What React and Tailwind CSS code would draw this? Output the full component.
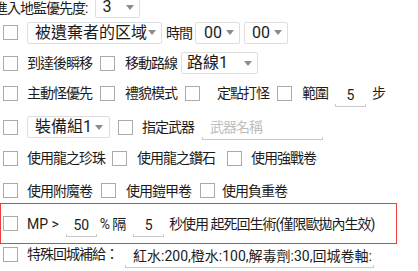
import React from "react";

const Cb = ({ className = "" }) => (
  <div className={`w-[15px] h-[15px] border border-[#ababab] bg-white shrink-0 ${className}`} />
);

const Arrow = () => (
  <div className="w-0 h-0 border-l-[4px] border-r-[4px] border-t-[5px] border-l-transparent border-r-transparent border-t-[#8c8c8c] shrink-0" />
);

const Sel = ({ children, className = "" }) => (
  <div className={`flex items-center justify-between border border-[#dedede] rounded-[2px] bg-white shrink-0 text-[16px] leading-none whitespace-nowrap ${className}`}>
    <span className="whitespace-nowrap">{children}</span>
    <Arrow />
  </div>
);

const UL = ({ children, className = "", inner = "" }) => (
  <div className={`flex flex-col shrink-0 ${className}`}>
    <div className={`flex-1 flex items-center ${inner}`}>{children}</div>
    <div className="h-[3px] border-x border-b border-[#c9c9c9]" />
  </div>
);

const L = ({ children, className = "" }) => (
  <span className={`text-[14px] tracking-[-1px] leading-none whitespace-nowrap shrink-0 ${className}`}>{children}</span>
);

const N = ({ children, className = "" }) => (
  <span className={`text-[14px] leading-none whitespace-nowrap shrink-0 ${className}`}>{children}</span>
);

export default function App() {
  return (
    <div
      className="w-[418px] h-[271px] overflow-hidden bg-white text-[#1c1c1c] flex flex-col"
      style={{ fontFamily: "Roboto, 'Noto Sans CJK TC', sans-serif" }}
    >
      {/* Row 1 */}
      <div className="flex items-center h-[22px] mt-[-4px] shrink-0">
        <L className="ml-[-6px] mt-[2px]">進入地監優先度:</L>
        <Sel className="ml-[8px] w-[45px] h-[21px] pl-[6px] pr-[5px]">3</Sel>
      </div>
      {/* Row 2 */}
      <div className="flex items-center h-[23px] mt-[3px] shrink-0">
        <Cb className="ml-[3px]" />
        <Sel className="ml-[9px] w-[135px] h-[22px] pl-[7px] pr-[5px]">被遺棄者的区域</Sel>
        <L className="ml-[4px]">時間</L>
        <Sel className="ml-[3px] w-[45px] h-[22px] pl-[8px] pr-[5px]">00</Sel>
        <Sel className="ml-[4px] w-[44px] h-[22px] pl-[7px] pr-[5px]">00</Sel>
      </div>
      {/* Row 3 */}
      <div className="flex items-center h-[22px] mt-[8px] shrink-0">
        <Cb className="ml-[3px]" />
        <L className="ml-[9px]">到達後瞬移</L>
        <Cb className="ml-[8px]" />
        <L className="ml-[10px]">移動路線</L>
        <Sel className="ml-[4px] w-[77px] h-[22px] pl-[5px] pr-[5px]">路線1</Sel>
      </div>
      {/* Row 4 */}
      <div className="flex items-center h-[22px] mt-[8px] shrink-0">
        <Cb className="ml-[3px]" />
        <L className="ml-[9px]">主動怪優先</L>
        <Cb className="ml-[8px]" />
        <L className="ml-[10px]">禮貌模式</L>
        <Cb className="ml-[8px]" />
        <L className="ml-[17px]">定點打怪</L>
        <Cb className="ml-[8px]" />
        <L className="ml-[10px]">範圍</L>
        <UL className="ml-[7px] w-[31px] h-[22px] mt-[6px]" inner="justify-center">
          <N>5</N>
        </UL>
        <L className="ml-[6px]">步</L>
      </div>
      {/* Row 5 */}
      <div className="flex items-center h-[22px] mt-[12px] shrink-0">
        <Cb className="ml-[3px]" />
        <Sel className="ml-[9px] w-[83px] h-[22px] pl-[7px] pr-[6px]">裝備組1</Sel>
        <Cb className="ml-[8px]" />
        <L className="ml-[9px]">指定武器</L>
        <UL className="ml-[8px] w-[121px] h-[22px] mt-[3px]" inner="pl-[8px]">
          <L className="text-[#bdbdbd]">武器名稱</L>
        </UL>
      </div>
      {/* Row 6 */}
      <div className="flex items-center h-[22px] mt-[9px] shrink-0">
        <Cb className="ml-[3px]" />
        <L className="ml-[9px]">使用龍之珍珠</L>
        <Cb className="ml-[7px]" />
        <L className="ml-[10px]">使用龍之鑽石</L>
        <Cb className="ml-[12px]" />
        <L className="ml-[9px]">使用強戰卷</L>
      </div>
      {/* Row 7 */}
      <div className="flex items-center h-[23px] mt-[10px] shrink-0">
        <Cb className="ml-[3px]" />
        <L className="ml-[9px]">使用附魔卷</L>
        <Cb className="ml-[9px]" />
        <L className="ml-[10px]">使用鎧甲卷</L>
        <Cb className="ml-[9px]" />
        <L className="ml-[7px]">使用負重卷</L>
      </div>
      {/* Red row */}
      <div className="flex items-center w-[397px] h-[41px] mt-[1px] border border-[#ee3b3b] shrink-0">
        <Cb className="ml-[2px]" />
        <N className="ml-[9px]">MP &gt;</N>
        <UL className="ml-[7px] w-[31px] h-[22px] mt-[5px]" inner="justify-center">
          <N>50</N>
        </UL>
        <N className="ml-[3px]">%</N>
        <L className="ml-[2px]">隔</L>
        <UL className="ml-[8px] w-[31px] h-[22px] mt-[5px]" inner="justify-center">
          <N>5</N>
        </UL>
        <L className="ml-[5px] tracking-[-0.7px]">秒使用 起死回生術(僅限歐拋內生效)</L>
      </div>
      {/* Last row */}
      <div className="flex items-center h-[22px] mt-[-1px] shrink-0">
        <Cb className="ml-[3px]" />
        <L className="ml-[9px]">特殊回城補給：</L>
        <UL className="ml-[7px] w-[249px] h-[22px] mt-[6px]" inner="pl-[8px]">
          <span className="text-[14px] leading-none whitespace-nowrap">紅水:200,橙水:100,解毒劑:30,回城卷軸:</span>
        </UL>
      </div>
    </div>
  );
}
